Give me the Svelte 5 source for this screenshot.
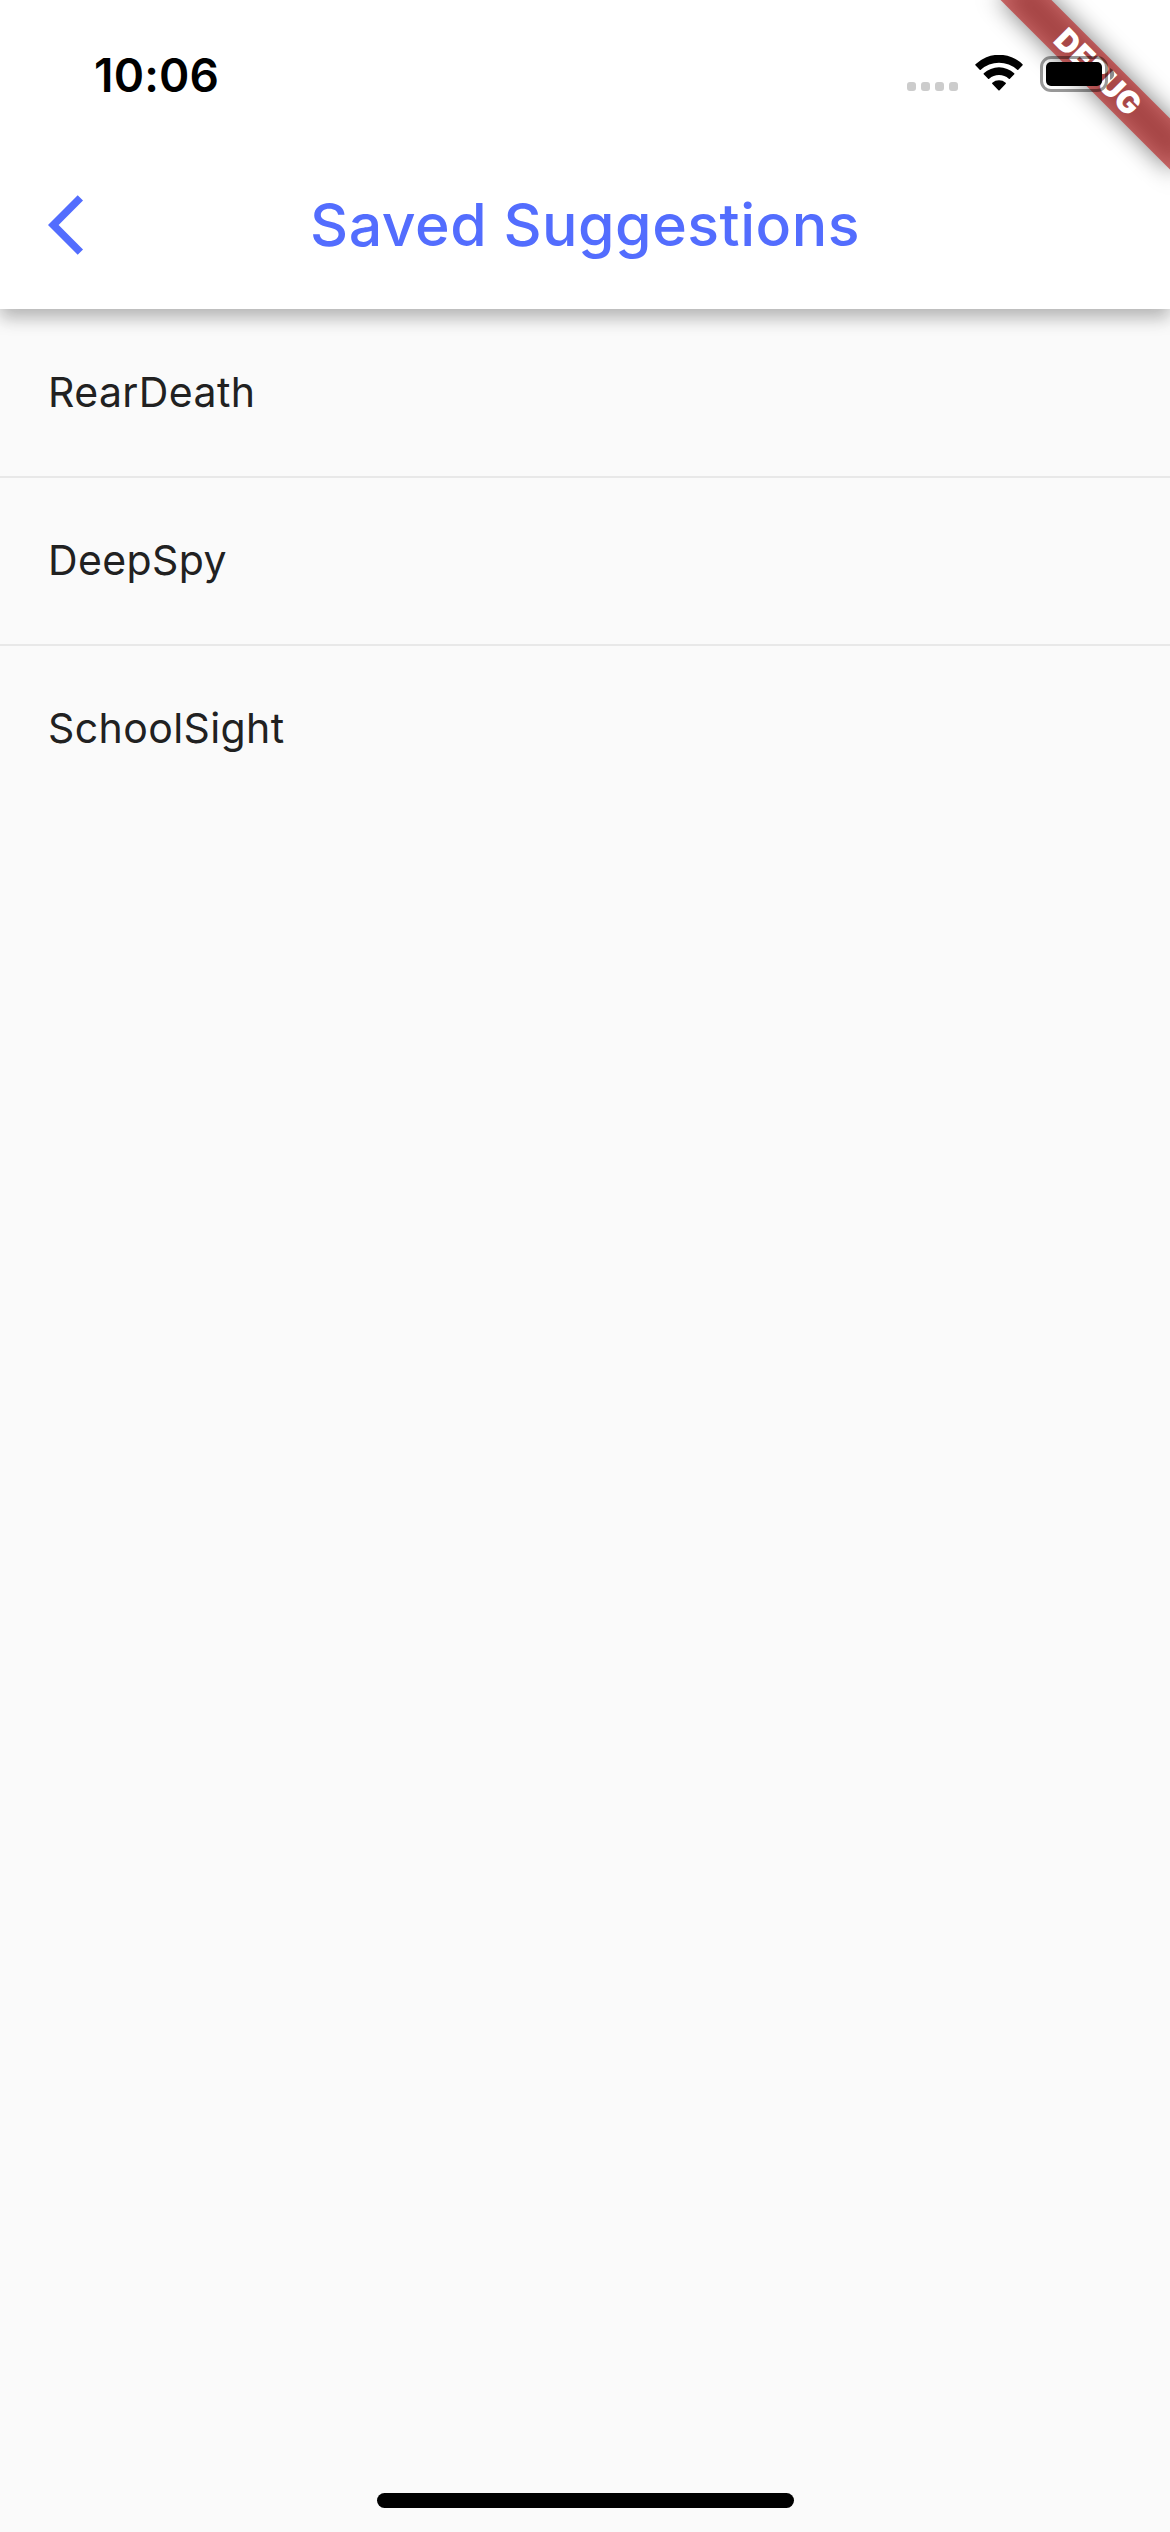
<script>
  const suggestions = ['RearDeath', 'DeepSpy', 'SchoolSight'];
</script>

<div class="screen">
  <header>
    <div class="status">
      <time>10:06</time>
      <div class="indicators">
        <div class="signal"><i></i><i></i><i></i><i></i></div>
        <svg class="wifi" viewBox="0 0 48 36" aria-hidden="true">
          <path d="M0.4 10.3Q0 9.8 .5 9.3A33.7 33.7 0 0 1 47.5 9.3Q48 9.8 47.6 10.3L43.3 14.8Q42.8 15.3 42.2 14.8A27 27 0 0 0 5.8 14.8Q5.2 15.3 4.7 14.8Z" />
          <path d="M8.7 19.3Q8.3 18.8 8.8 18.3A22.4 22.4 0 0 1 39.2 18.3Q39.7 18.8 39.3 19.3L34.9 23.8Q34.4 24.3 33.8 23.8A14.7 14.7 0 0 0 14.2 23.8Q13.6 24.3 13.1 23.8Z" />
          <path d="M17.2 28.800Q16.8 28.2 17.3 27.8A10.4 10.4 0 0 1 30.7 27.8Q31.2 28.2 30.8 28.800L24.6 35.3Q24 35.9 23.4 35.3Z" />
        </svg>
        <svg class="battery" viewBox="0 0 74 36" aria-hidden="true">
          <rect class="case" x="1.5" y="1.5" width="65" height="33" rx="9.5" />
          <path class="tip" d="M70 12Q74.200 14 74.200 18T70 24Z" />
          <rect x="6" y="6" width="56" height="24" rx="5" />
        </svg>
      </div>
    </div>
    <div class="bar">
      <svg class="back" viewBox="0 0 24 24" role="img" aria-label="Back">
        <path d="M11.67 3.87 9.9 2.1 0 12l9.9 9.9 1.77-1.770L3.54 12z" />
      </svg>
      <h1>Saved Suggestions</h1>
    </div>
  </header>

  <ul>
    {#each suggestions as name}
      <li>{name}</li>
    {/each}
  </ul>

  <div class="home"></div>
  <div class="corner">
    <div class="ribbon shade"></div>
    <div class="ribbon"><span>DEBUG</span></div>
  </div>
</div>

<style>
  :global(body) { margin: 0; }
  .screen {
    position: relative;
    display: flex;
    flex-direction: column;
    width: 1170px;
    height: 2532px;
    overflow: hidden;
    background: #fafafa;
    font-family: Inter, "Liberation Sans", sans-serif;
  }
  header {
    flex: none;
    height: 309px;
    background: #fff;
    box-shadow: 0 9px 16px rgba(0, 0, 0, .26), 0 3px 30px rgba(0, 0, 0, .04);
  }
  .status {
    display: flex;
    justify-content: space-between;
    box-sizing: border-box;
    height: 141px;
    padding: 55px 56px 0 94px;
  }
  time {
    font-size: 46px;
    font-weight: 600;
    line-height: 40px;
    letter-spacing: .2px;
  }
  .indicators {
    position: relative;
    z-index: 2;
    display: flex;
    align-items: flex-start;
    height: 36px;
  }
  .signal { display: flex; gap: 5px; padding-top: 27px; }
  .signal i { width: 9px; height: 9px; border-radius: 3px; background: #ccc; }
  .wifi { width: 48px; height: 36px; margin-left: 17px; }
  .battery { width: 74px; height: 36px; margin: 1px 0 0 17px; overflow: visible; }
  .case { fill: none; stroke: #000; stroke-width: 3; opacity: .4; }
  .tip { opacity: .45; }
  .bar {
    display: grid;
    grid-template-columns: 72px 1fr 72px;
    align-items: center;
    height: 168px;
    padding: 0 48px;
  }
  .back { width: 72px; height: 72px; fill: #536dfe; }
  h1 {
    margin: 0;
    color: #536dfe;
    font-size: 59px;
    font-weight: 500;
    line-height: 72px;
    letter-spacing: .5px;
    text-align: center;
    white-space: nowrap;
  }
  ul { margin: 0; padding: 1px 0 0; list-style: none; }
  li {
    box-sizing: border-box;
    height: 168px;
    padding: 0 48px;
    border-bottom: 2px solid #e8e8e8;
    color: #212121;
    font-size: 41px;
    font-weight: 380;
    line-height: 164px;
    letter-spacing: .4px;
  }
  li:last-child { border-bottom: 0; }
  .home {
    width: 417px;
    height: 15px;
    margin: auto auto 24px 377px;
    border-radius: 8px;
    background: #000;
  }
  .corner {
    position: absolute;
    top: 0;
    right: 0;
    z-index: 1;
    width: 300px;
    height: 300px;
    overflow: hidden;
  }
  .ribbon {
    position: absolute;
    top: 54px;
    left: 108px;
    width: 240px;
    height: 36px;
    transform: rotate(45deg);
    background: rgba(183, 28, 28, .627);
    color: #fff;
    font-size: 31px;
    font-weight: 900;
    line-height: 36px;
    text-align: center;
  }
  .shade { background: rgba(0, 0, 0, .5); filter: blur(12px); }
</style>
